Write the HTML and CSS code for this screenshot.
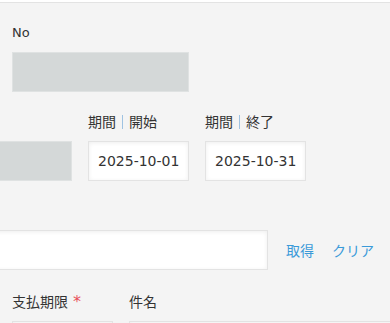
FILE: index.html
```html
<!DOCTYPE html>
<html lang="ja">
<head>
<meta charset="utf-8">
<link rel="stylesheet" href="styles.css">
</head>
<body>
<div class="topbar"></div>
<main class="form">
  <div class="field field-no">
    <label class="label">No</label>
    <div class="box box-disabled w177"></div>
  </div>

  <div class="row row-period">
    <div class="field">
      <label class="label">&nbsp;</label>
      <div class="box box-disabled w177"></div>
    </div>
    <div class="field">
      <label class="label">期間<span class="sep"></span>開始</label>
      <div class="box box-input w101"><span class="val">2025-10-01</span></div>
    </div>
    <div class="field">
      <label class="label">期間<span class="sep"></span>終了</label>
      <div class="box box-input w101"><span class="val">2025-10-31</span></div>
    </div>
  </div>

  <div class="row row-search">
    <div class="box box-input w-search"></div>
    <a class="link">取得</a>
    <a class="link">クリア</a>
  </div>

  <div class="row row-bottom">
    <div class="field">
      <label class="label">支払期限<span class="req">*</span></label>
      <div class="box box-input w101"></div>
    </div>
    <div class="field field-grow">
      <label class="label">件名</label>
      <div class="box box-input wfull"></div>
    </div>
  </div>
</main>
</body>
</html>
```

FILE: styles.css
```css
* { box-sizing: border-box; }
html, body { margin: 0; padding: 0; }
body {
  width: 390px;
  height: 323px;
  overflow: hidden;
  background: #f4f4f4;
  font-family: "DejaVu Sans", "Noto Sans CJK JP", sans-serif;
  font-size: 13px;
  color: #333;
}
.topbar {
  height: 3px;
  background: #fff;
  border-bottom: 1px solid #e3e3e3;
}
.form {
  padding: 20px 0 0 12px;
}
.field {
  display: flex;
  flex-direction: column;
}
.label {
  display: block;
  height: 20px;
  line-height: 20px;
  margin-bottom: 9px;
  white-space: nowrap;
  font-size: 14px;
}
.field-no .label { font-size: 13px; }
.sep {
  display: inline-block;
  width: 1px;
  height: 14px;
  background: #9fc3e2;
  margin: 0 6px 0 6px;
  vertical-align: -2px;
}
.req {
  color: #e8505b;
  margin-left: 5px;
  font-size: 16px;
}
.box {
  height: 40px;
  border: 1px solid #e3e3e3;
}
.box-disabled {
  background: #d4d8d8;
  border-color: #dfe2e2;
}
.box-input {
  background: #fff;
  box-shadow: inset 0 1px 4px rgba(0,0,0,0.07);
  display: flex;
  align-items: center;
  padding-left: 9px;
}
.val {
  font-size: 14px;
  color: #333;
}
.w177 { width: 177px; }
.w101 { width: 101px; }
.wfull { width: 300px; }
.row {
  display: flex;
}
.row-period {
  margin-top: 20px;
  margin-left: -117px;
  gap: 16px;
}
.row-search {
  margin-top: 49px;
  margin-left: -20px;
  align-items: center;
}
.w-search { width: 276px; }
.link {
  color: #3a9ad9;
  font-size: 14px;
  margin-left: 18px;
  cursor: pointer;
}
.link + .link { margin-left: 18px; }
.row-bottom {
  margin-top: 22px;
  gap: 16px;
}
```
